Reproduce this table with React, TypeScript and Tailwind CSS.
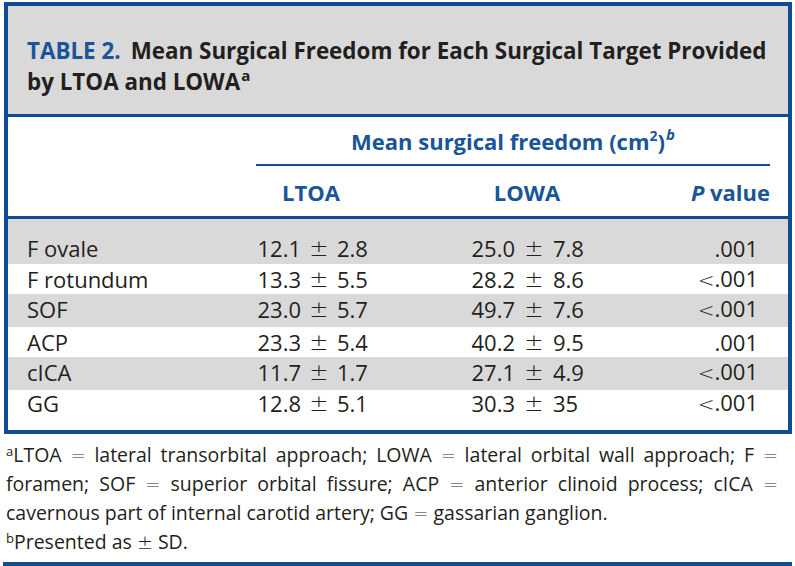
const font = "font-['Open_Sans',sans-serif]";
const sym = "font-['DejaVu_Sans',sans-serif] font-extralight";

const rows = [
  { name: "F ovale", a: ["12.1", "2.8"], b: ["25.0", "7.8"], p: ".001", lt: false, h: "h-[45px] pt-[13px]", bg: "bg-[#d9d9d9]" },
  { name: "F rotundum", a: ["13.3", "5.5"], b: ["28.2", "8.6"], p: ".001", lt: true, h: "h-[30px]", bg: "bg-white" },
  { name: "SOF", a: ["23.0", "5.7"], b: ["49.7", "7.6"], p: ".001", lt: true, h: "h-[33px] pb-[3px]", bg: "bg-[#d9d9d9]" },
  { name: "ACP", a: ["23.3", "5.4"], b: ["40.2", "9.5"], p: ".001", lt: false, h: "h-[30px]", bg: "bg-white" },
  { name: "cICA", a: ["11.7", "1.7"], b: ["27.1", "4.9"], p: ".001", lt: true, h: "h-[33px] pb-[2px]", bg: "bg-[#d9d9d9]" },
  { name: "GG", a: ["12.8", "5.1"], b: ["30.3", "35"], p: ".001", lt: true, h: "h-[40px] pb-[14px]", bg: "bg-white" },
];

function Eq() {
  return <span className={`${sym} text-[18px]`}>=</span>;
}

function Row({ r }: { r: (typeof rows)[number] }) {
  return (
    <div className={`flex items-center text-[22px] leading-[31px] text-[#231f20] ${r.h} ${r.bg}`}>
      <div className="w-[200px] pl-[19px]">{r.name}</div>
      <div className="w-[93px] text-right">{r.a[0]}</div>
      <div className={`w-[36px] text-center text-[23px] ${sym}`}>±</div>
      <div className="w-[83px]">{r.a[1]}</div>
      <div className="w-[95px] text-right">{r.b[0]}</div>
      <div className={`w-[38px] text-center text-[23px] ${sym}`}>±</div>
      <div className="w-[85px]">{r.b[1]}</div>
      <div className="w-[120px] text-right">
        {r.lt ? <span className={`${sym} text-[20px]`}>&lt;</span> : null}
        {r.p}
      </div>
    </div>
  );
}

export default function App() {
  return (
    <div className={`min-h-[566px] bg-white pt-[2px] ${font}`}>
      <div className="ml-[4px] w-[788px] border-[4px] border-[#0e4d92]">
        <div className="h-[111px] whitespace-nowrap border-b-[3px] border-[#0e4d92] bg-[#d9d9d9] pl-[19px] pt-[29px] text-[22.4px] font-bold leading-[31px] text-[#231f20]">
          <div>
            <span className="text-[#1a5597]">TABLE 2.</span>
            <span className="ml-[10px]">Mean Surgical Freedom for Each Surgical Target Provided</span>
          </div>
          <div>
            by LTOA and LOWA
            <span className="relative top-[-9px] ml-[1px] text-[15px] leading-none">a</span>
          </div>
        </div>
        <div className="h-[102px] border-b-[3px] border-[#0e4d92] bg-white pt-[9px] text-[22px] font-bold leading-[31px] text-[#1a5597]">
          <div className="ml-[248px] w-[514px] text-center">
            Mean surgical freedom (cm
            <span className="relative top-[-9px] text-[14px] leading-none">2</span>)
            <span className="relative top-[-10px] ml-[1px] text-[15px] italic leading-none">b</span>
          </div>
          <div className="ml-[248px] mt-[7px] h-[2px] w-[514px] bg-[#0e4d92]" />
          <div className="mt-[11px] flex">
            <div className="w-[248px]" />
            <div className="w-[110px] text-center">LTOA</div>
            <div className="w-[106px]" />
            <div className="w-[110px] text-center">LOWA</div>
            <div className="w-[188px] text-right">
              <span className="italic">P</span> value
            </div>
          </div>
        </div>
        {rows.map((r) => (
          <Row key={r.name} r={r} />
        ))}
      </div>
      <div className="ml-[6px] mt-[7px] w-[772px] text-[19.5px] leading-[28px] text-[#231f20]">
        <div className="text-justify [text-align-last:justify]">
          <span className="relative top-[-6px] text-[13px] leading-none">a</span>LTOA <Eq /> lateral transorbital approach; LOWA <Eq /> lateral orbital wall approach; F <Eq />
        </div>
        <div className="text-justify [text-align-last:justify]">
          foramen; SOF <Eq /> superior orbital fissure; ACP <Eq /> anterior clinoid process; cICA <Eq />
        </div>
        <div>
          cavernous part of internal carotid artery; GG <Eq /> gassarian ganglion.
        </div>
        <div>
          <span className="relative top-[-6px] text-[13px] leading-none">b</span>Presented as{" "}
          <span className={`${sym} text-[19px]`}>±</span> SD.
        </div>
      </div>
      <div className="ml-[3px] mt-[6px] h-[4px] w-[789px] bg-[#0e4d92]" />
    </div>
  );
}
